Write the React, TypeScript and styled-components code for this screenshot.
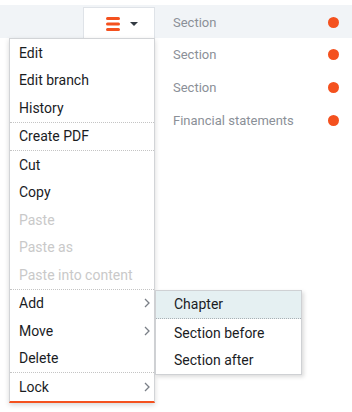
import React from "react";
import styled, { createGlobalStyle } from "styled-components";

const GlobalStyle = createGlobalStyle`
  body {
    margin: 0;
    background: #ffffff;
    font-family: Roboto, "Liberation Sans", Arial, sans-serif;
  }
`;

type Item = { label: string; disabled?: boolean; sub?: boolean };

const groups: Item[][] = [
  [{ label: "Edit" }, { label: "Edit branch" }, { label: "History" }],
  [{ label: "Create PDF" }],
  [
    { label: "Cut" },
    { label: "Copy" },
    { label: "Paste", disabled: true },
    { label: "Paste as", disabled: true },
    { label: "Paste into content", disabled: true },
  ],
  [{ label: "Add", sub: true }, { label: "Move", sub: true }, { label: "Delete" }],
  [{ label: "Lock", sub: true }],
];

const rows = ["Section", "Section", "Section", "Financial statements"];

const Chevron = () => (
  <svg width="6" height="10" viewBox="0 0 6 10">
    <polyline points="1,1 5,5 1,9" fill="none" stroke="#7a7f87" strokeWidth="1.3" />
  </svg>
);

const Hamburger = () => (
  <svg width="14" height="14" viewBox="0 0 14 14">
    <rect x="0" y="0" width="14" height="3" rx="1.5" fill="#f4511e" />
    <rect x="0" y="5.5" width="14" height="3" rx="1.5" fill="#f4511e" />
    <rect x="0" y="11" width="14" height="3" rx="1.5" fill="#f4511e" />
  </svg>
);

const Caret = () => (
  <svg width="8" height="4" viewBox="0 0 8 4">
    <polygon points="0,0 8,0 4,4" fill="#333a42" />
  </svg>
);

const App = () => {
  return (
    <Page>
      <GlobalStyle />
      {rows.map((title, i) => (
        <Row key={i} $active={i === 0}>
          <ActionsCell>
            {i === 0 && (
              <>
                <MenuButton>
                  <Hamburger />
                  <Caret />
                </MenuButton>
                <Menu>
                  {groups.map((group, g) => (
                    <Group key={g} $first={g === 0}>
                      {group.map((item) => (
                        <MenuItem key={item.label} $disabled={item.disabled}>
                          <span>{item.label}</span>
                          {item.sub && <Chevron />}
                          {item.label === "Add" && (
                            <SubMenu>
                              <SubItem $hover>Chapter</SubItem>
                              <SubItem>Section before</SubItem>
                              <SubItem>Section after</SubItem>
                            </SubMenu>
                          )}
                        </MenuItem>
                      ))}
                    </Group>
                  ))}
                </Menu>
              </>
            )}
          </ActionsCell>
          <TitleCell>
            <Title>{title}</Title>
            <Dot />
          </TitleCell>
        </Row>
      ))}
    </Page>
  );
};

const Page = styled.div`
  box-sizing: border-box;
  padding-top: 5px;
  width: 352px;
  min-height: 412px;
`;

const Row = styled.div<{ $active?: boolean }>`
  display: grid;
  grid-template-columns: 155px 1fr;
  height: 33px;
  background: ${(p) => (p.$active ? "#f1f4f7" : "transparent")};
`;

const ActionsCell = styled.div`
  position: relative;
  display: flex;
  justify-content: flex-end;
  align-items: flex-start;
`;

const MenuButton = styled.div`
  box-sizing: border-box;
  width: 72px;
  height: 32px;
  margin-top: 2px;
  padding-left: 22px;
  display: flex;
  align-items: center;
  gap: 10px;
  background: #ffffff;
  border: 1px solid #dfe3e8;
  border-bottom: none;
`;

const Menu = styled.div`
  position: absolute;
  top: 33px;
  right: 0;
  z-index: 10;
  box-sizing: border-box;
  width: 146px;
  background: #ffffff;
  border: 1px solid #d2d4d7;
  border-bottom: 2px solid #f4511e;
  box-shadow: 0 2px 5px rgba(0, 0, 0, 0.16);
`;

const Group = styled.div<{ $first?: boolean }>`
  border-top: ${(p) => (p.$first ? "none" : "1px dotted #c4c4c4")};
`;

const MenuItem = styled.div<{ $disabled?: boolean }>`
  position: relative;
  height: 27.5px;
  display: flex;
  align-items: center;
  justify-content: space-between;
  padding: 0 4px 0 9px;
  font-size: 14px;
  color: ${(p) => (p.$disabled ? "#c9c9c9" : "#1a1c1f")};
`;

const SubMenu = styled.div`
  position: absolute;
  top: 0;
  left: calc(100% + 1px);
  box-sizing: border-box;
  width: 147px;
  background: #ffffff;
  border: 1px solid #cfd1d4;
  box-shadow: 2px 2px 4px rgba(0, 0, 0, 0.14);
`;

const SubItem = styled.div<{ $hover?: boolean }>`
  height: 27.5px;
  display: flex;
  align-items: center;
  padding-left: 18px;
  font-size: 14px;
  color: #1a1c1f;
  background: ${(p) => (p.$hover ? "#e5f0f2" : "#ffffff")};
  border-bottom: ${(p) => (p.$hover ? "1px dotted #a9b0b5" : "none")};
`;

const TitleCell = styled.div`
  display: flex;
  align-items: center;
  padding: 0 13px 0 18px;
`;

const Title = styled.span`
  font-size: 13px;
  color: #8b9098;
`;

const Dot = styled.span`
  margin-left: auto;
  width: 11px;
  height: 11px;
  border-radius: 50%;
  background: #f4511e;
`;

export default App;
